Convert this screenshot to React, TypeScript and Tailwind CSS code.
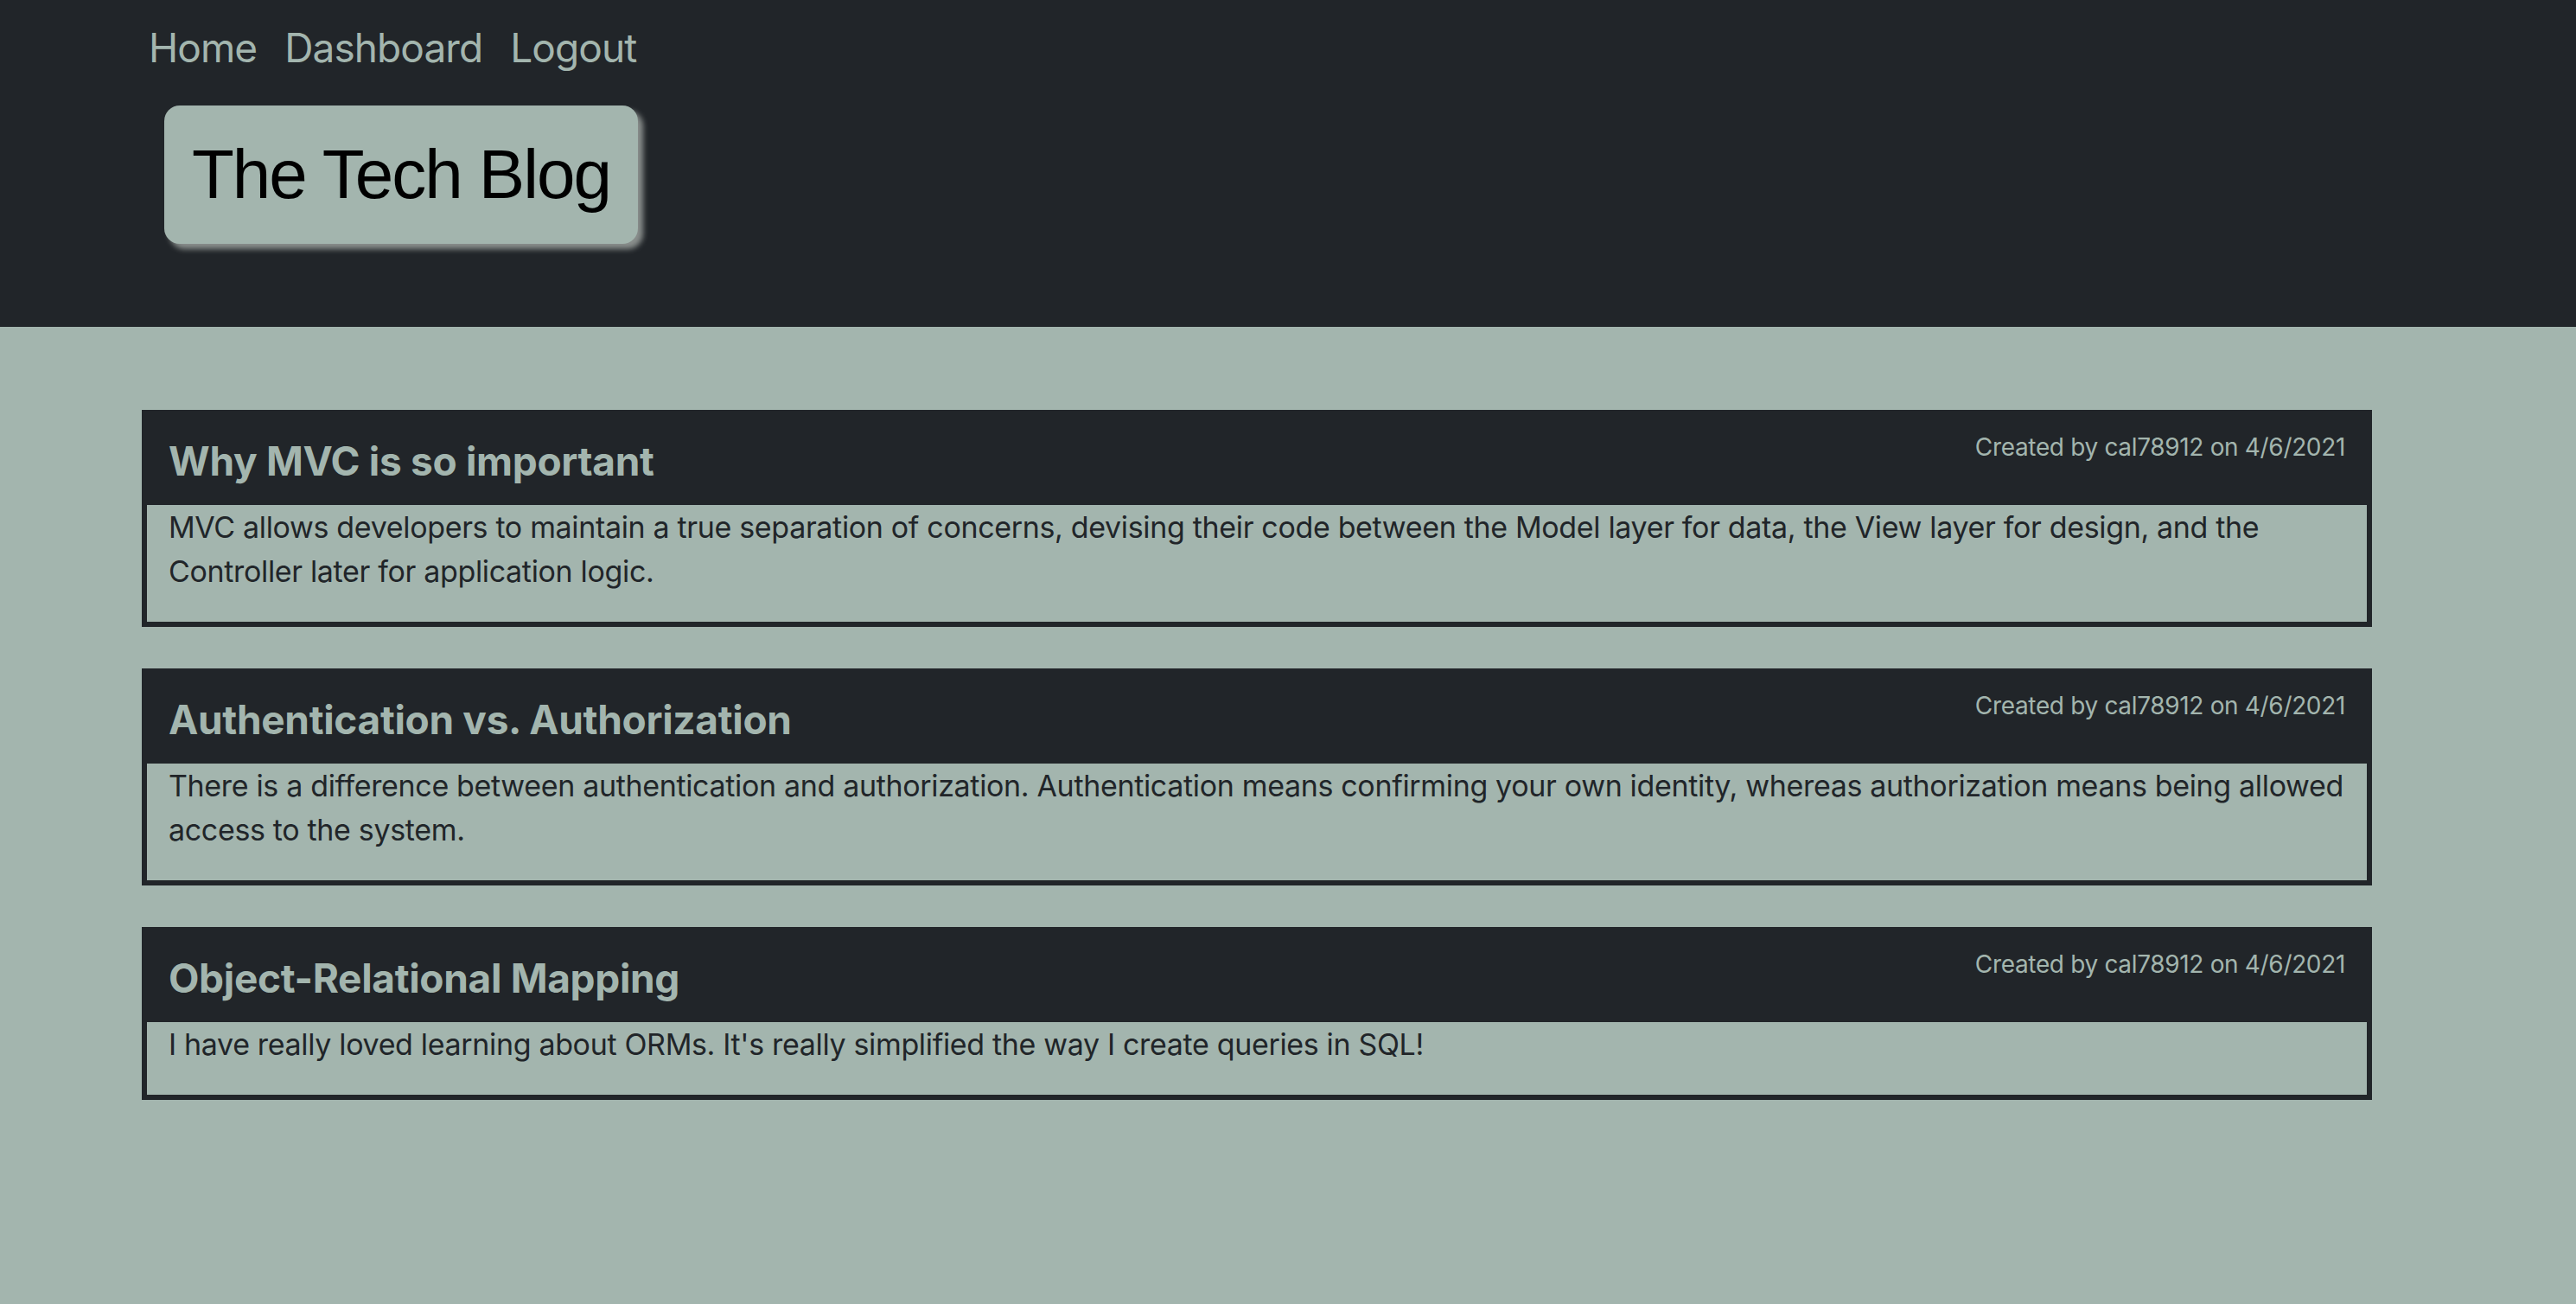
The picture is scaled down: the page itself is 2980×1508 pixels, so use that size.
import React from "react";

const posts = [
  {
    title: "Why MVC is so important",
    body: "MVC allows developers to maintain a true separation of concerns, devising their code between the Model layer for data, the View layer for design, and the Controller later for application logic.",
  },
  {
    title: "Authentication vs. Authorization",
    body: "There is a difference between authentication and authorization. Authentication means confirming your own identity, whereas authorization means being allowed access to the system.",
  },
  {
    title: "Object-Relational Mapping",
    body: "I have really loved learning about ORMs. It's really simplified the way I create queries in SQL!",
  },
];

export default function App() {
  return (
    <div className="min-h-[1508px] bg-[#a3b5ae] font-['Inter',sans-serif]">
      <header className="h-[378px] bg-[#212529] pl-[172px] pt-[26px]">
        <nav className="flex gap-[32px] text-[46px] leading-[58px] tracking-[-0.02em] text-[#a3b5ae]">
          <a href="#">Home</a>
          <a href="#">Dashboard</a>
          <a href="#">Logout</a>
        </nav>
        <div className="mt-[38px] ml-[18px] flex h-[160px] w-fit items-center rounded-[18px] bg-[#a3b5ae] px-[32px] shadow-[6px_6px_6px_#8a8f8d]">
          <h1 className="font-['Liberation_Sans',Arial,sans-serif] text-[80px] leading-none tracking-[-0.025em] text-black">
            The Tech Blog
          </h1>
        </div>
      </header>
      <main className="ml-[164px] flex w-[2580px] flex-col gap-[48px] pt-[96px]">
        {posts.map((p) => (
          <article key={p.title} className="border-[6px] border-[#212529]">
            <div className="flex h-[104px] items-start justify-between bg-[#212529] px-[25px]">
              <h2 className="pt-[24px] text-[46px] font-bold leading-[58px] tracking-[-0.007em] text-[#a3b5ae]">
                {p.title}
              </h2>
              <span className="pt-[20px] text-[28px] leading-[34px] tracking-[-0.012em] text-[#a3b5ae]">
                Created by cal78912 on 4/6/2021
              </span>
            </div>
            <p className="pl-[25px] pr-[23px] pb-[33px] text-[34px] leading-[51px] tracking-[-0.01em] text-[#212529]">
              {p.body}
            </p>
          </article>
        ))}
      </main>
    </div>
  );
}
